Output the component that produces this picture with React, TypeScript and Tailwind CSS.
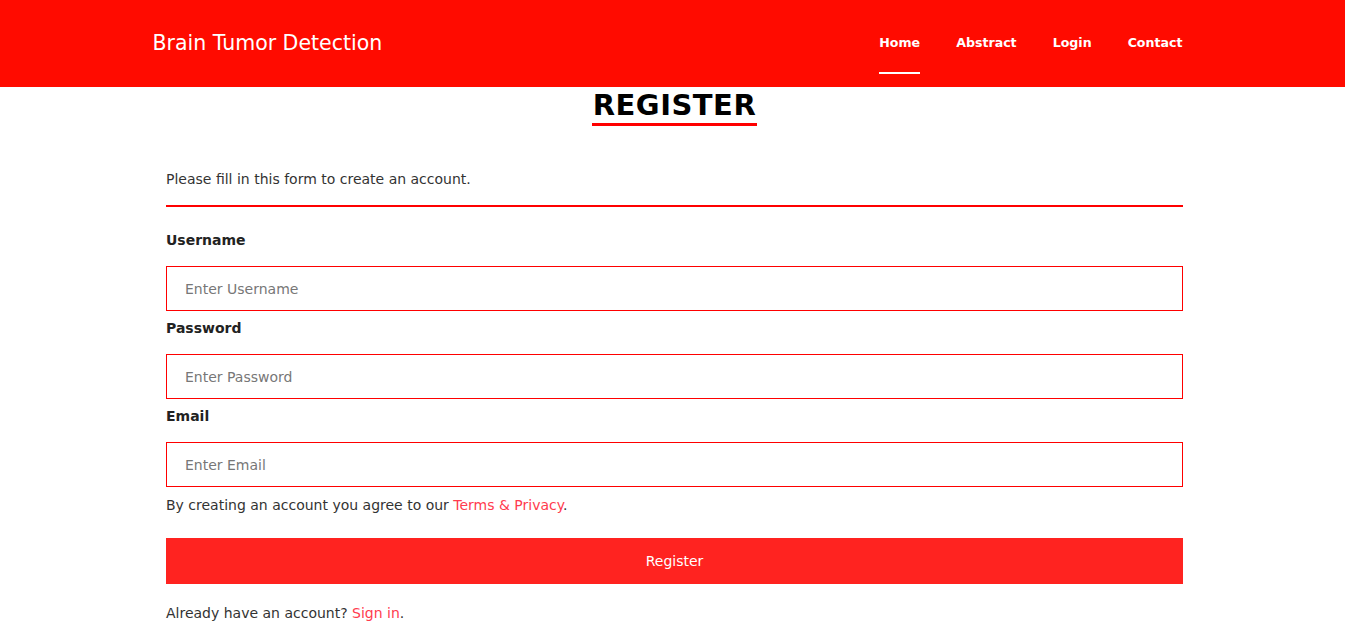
import React from 'react';

const font = { fontFamily: '"DejaVu Sans", "Open Sans", sans-serif' };

const Field = ({ label, placeholder, type }: { label: string; placeholder: string; type: string }) => (
  <div>
    <label className="block text-[14px] font-bold text-[#222] leading-[20px] h-[26px] pt-[3px]">{label}</label>
    <input
      type={type}
      placeholder={placeholder}
      className="mt-[13px] w-full h-[45px] border border-[#ff0000] px-[18px] text-[14px] text-[#333] placeholder:text-[#777] outline-none"
      style={font}
    />
  </div>
);

export default function App() {
  return (
    <div className="min-h-screen bg-white" style={font}>
      <header className="h-[87px] bg-[#ff0b00]">
        <div className="mx-auto w-[1040px] h-full flex items-center justify-between pr-[10px]">
          <span className="text-white text-[20.5px]">Brain Tumor Detection</span>
          <nav className="flex items-center gap-[36px] text-white text-[12.6px] font-bold">
            <a className="relative py-2">
              Home
              <span className="absolute left-0 right-0 top-[46px] h-[2px] bg-white" />
            </a>
            <a className="py-2">Abstract</a>
            <a className="py-2">Login</a>
            <a className="py-2">Contact</a>
          </nav>
        </div>
      </header>

      <main className="mx-auto w-[1021px] pl-[4px]">
        <div className="flex justify-center">
          <h1 className="text-[29px] font-bold text-black leading-[36px] border-b-[3px] border-[#ff0000] px-[1px] tracking-[0.5px]">
            REGISTER
          </h1>
        </div>

        <p className="mt-[43px] text-[14px] text-[#333]">Please fill in this form to create an account.</p>
        <div className="mt-[15px] h-[2px] bg-[#ff0000]" />

        <div className="mt-[20px] flex flex-col gap-[4px]">
          <Field label="Username" placeholder="Enter Username" type="text" />
          <Field label="Password" placeholder="Enter Password" type="password" />
          <Field label="Email" placeholder="Enter Email" type="email" />
        </div>

        <p className="mt-[8px] text-[14px] text-[#333]">
          By creating an account you agree to our <a className="text-[#ff3b4e]">Terms &amp; Privacy</a>.
        </p>

        <button className="mt-[22px] w-full h-[46px] bg-[#ff2320] text-white text-[14px]" style={font}>
          Register
        </button>

        <p className="mt-[19px] text-[14px] text-[#333]">
          Already have an account? <a className="text-[#ff3b4e]">Sign in</a>.
        </p>
      </main>
    </div>
  );
}
